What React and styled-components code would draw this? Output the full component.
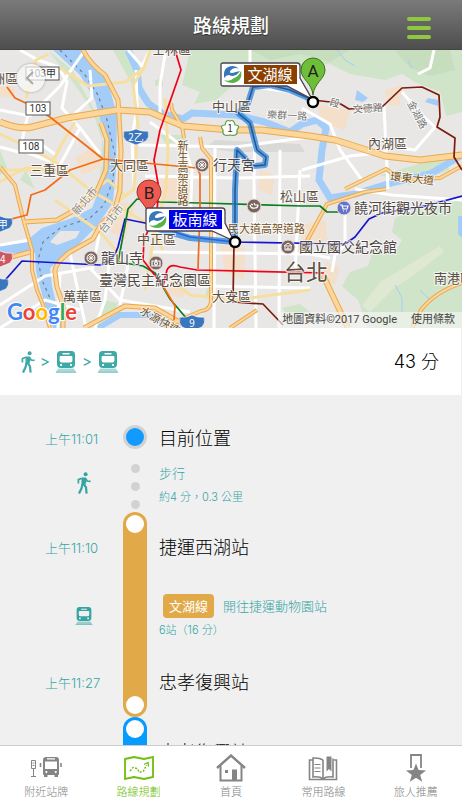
import styled, { createGlobalStyle, css } from "styled-components"

const GlobalStyle = createGlobalStyle`
  * {
    box-sizing: border-box;
  }
  body {
    margin: 0;
    background: #f0f0f0;
    font-family: Inter, "Noto Sans CJK TC", sans-serif;
    color: #111;
  }
  button {
    padding: 0;
    border: 0;
    background: none;
    font: inherit;
    color: inherit;
    cursor: pointer;
  }
`

const Screen = styled.div`
  display: flex;
  flex-direction: column;
  height: 100vh;
`

const Header = styled.header`
  display: grid;
  grid-template-columns: 1fr auto 1fr;
  align-items: center;
  flex: none;
  height: 50px;
  padding: 4px 31px 0;
  background: linear-gradient(#7a7a7a, #4e4e4e);
  border-bottom: 1px solid #444;
`

const Title = styled.h1`
  grid-column: 2;
  margin: 0;
  font-size: 19px;
  line-height: 24px;
  font-weight: 500;
  color: #fff;
  text-shadow: 0 1px 1px rgba(0, 0, 0, 0.5);
`

const MenuButton = styled.button`
  justify-self: end;
  display: flex;
  flex-direction: column;
  gap: 5px;
  width: 24px;
  padding-top: 2px;
`

const MenuBar = styled.span`
  height: 4px;
  border-radius: 2px;
  background: #8fc73e;
`

const MapArea = styled.section`
  position: relative;
  flex: none;
  height: 278px;
  overflow: hidden;
`

const MapSvg = styled.svg`
  display: block;
  width: 100%;
  height: 100%;
  font-family: "Noto Sans CJK TC", sans-serif;
`

const BackButton = styled.button`
  position: absolute;
  top: 14px;
  left: 17px;
  display: grid;
  place-items: center;
  width: 28px;
  height: 28px;
  border-radius: 50%;
  background: rgba(250, 250, 250, 0.7);
  box-shadow: 0 0 3px rgba(0, 0, 0, 0.3);
`

const Attribution = styled.div`
  position: absolute;
  right: 0;
  bottom: 0;
  display: flex;
  gap: 14px;
  padding: 0 7px 0 4px;
  background: rgba(245, 245, 245, 0.65);
  font: 11px/16px Roboto, "Noto Sans CJK TC", sans-serif;
  color: #444;

  a {
    color: inherit;
    text-decoration: none;
  }
`

const Summary = styled.section`
  display: flex;
  align-items: center;
  justify-content: space-between;
  flex: none;
  height: 67px;
  padding: 0 22px 0 21px;
  background: #fff;
  border-right: 1px solid #f0f0f0;
`

const Modes = styled.div`
  display: flex;
  align-items: center;
  gap: 5px;
  font-size: 15px;
  color: #3fa9a7;
`

const Duration = styled.span`
  font-size: 18px;
  line-height: 24px;
  font-weight: 300;
  color: #000;
`

const Timeline = styled.main`
  flex: 1;
  min-height: 0;
  padding-top: 30px;
  overflow-y: auto;
  scrollbar-width: none;
`

const Row = styled.section`
  display: grid;
  grid-template-columns: 123px 24px 1fr;
  min-height: ${(props) => props.$height}px;
`

const column = css`
  display: flex;
  flex-direction: column;
  justify-content: ${(props) => (props.$spread ? "space-between" : "center")};
  padding-block: ${(props) => (props.$spread ? "24px 22px" : "2px 0")};
`

const TimeColumn = styled.div`
  ${column}
  padding-left: 45px;
  color: #35a5a3;
`

const Time = styled.time`
  font-size: 13px;
  line-height: 24px;
  font-weight: 300;
`

const ModeIcon = styled.span`
  display: grid;
  place-items: center;
  width: 77px;
`

const Details = styled.div`
  ${column}
  padding-left: 12px;
`

const Station = styled.h2`
  margin: 0;
  font-size: 18px;
  line-height: 24px;
  font-weight: 300;
  color: #000;
`

const Line = styled.div`
  display: flex;
  align-items: center;
  gap: 9px;
  font-size: 13px;
  line-height: 24px;
  font-weight: 300;
  color: #35a5a3;
`

const Note = styled.p`
  margin: 4px 0 0;
  font-size: 11px;
  line-height: 16px;
  font-weight: 300;
  color: #35a5a3;
`

const LineBadge = styled.span`
  margin-left: 4px;
  padding: 0 6px;
  border-radius: 4px;
  background: ${(props) => props.$color};
  color: #fff;
  font-weight: 400;
`

const StartMark = styled.span`
  width: 24px;
  height: 24px;
  border: 3px solid #d2d2d2;
  border-radius: 50%;
  background: #119bff;
`

const Dots = styled.span`
  display: flex;
  flex-direction: column;
  align-items: center;
  gap: 9px;
  padding-top: 13px;
`

const Dot = styled.span`
  width: 9px;
  height: 9px;
  border-radius: 50%;
  background: #d2d2d2;
`

const Rail = styled.span`
  display: flex;
  flex-direction: column;
  justify-content: space-between;
  padding: 3px;
  border-radius: 12px;
  background: ${(props) => props.$color};
`

const RailStop = styled.span`
  width: 18px;
  height: 18px;
  border-radius: 50%;
  background: #fff;
`

const TabBar = styled.nav`
  display: grid;
  grid-template-columns: repeat(5, 1fr);
  flex: none;
  height: 55px;
  background: #fff;
  border-top: 1px solid #ccc;
`

const Tab = styled.a`
  display: flex;
  flex-direction: column;
  align-items: center;
  padding-top: 6px;
  font-size: 11px;
  line-height: 16px;
  font-weight: 300;
  text-decoration: none;
  color: ${(props) => (props.$active ? "#6ebe0a" : "#858585")};
`

const TabIcon = styled.span`
  display: grid;
  place-items: center;
  height: 32px;
`

function WalkIcon() {
  return (
    <svg width="14" height="22" viewBox="0 0 14 22" fill="none" stroke="currentColor">
      <circle cx="8.6" cy="2.2" r="2" fill="currentColor" stroke="none" />
      <path d="M4.6 5.400h4.200l.8 3.400-1.400 4.400H4.400z" fill="currentColor" stroke="none" />
      <path d="M4.800 6.200 1.400 7.600v4" strokeWidth="1.700" />
      <path d="M8.400 6.200l1.800 2.800 3.400.4" strokeWidth="1.700" />
      <path d="M5.600 12 4.400 16.600 2 21.600" strokeWidth="2.200" />
      <path d="M6.800 12l2.200 3.400.6 6.200" strokeWidth="2.200" />
    </svg>
  )
}

function TrainIcon({ size = 22 }) {
  return (
    <svg width={size} height={size} viewBox="0 0 22 22">
      <path
        fill="currentColor"
        fillRule="evenodd"
        d="M5.5 0h11q3.500 0 3.500 3.500v9.500q0 4-4 4H6q-4 0-4-4V3.500Q2 0 5.500 0zM7.500 2v1.400h7V2zM5.600 5q-1 0-1 1v3.400q0 2 2 2h8.800q2 0 2-2V6q0-1-1-1zM6 12.800a1.100 1.100 0 1 0 .1 0zM16 12.800a1.100 1.100 0 1 0 .1 0z"
      />
      <path d="M3.400 17.600h15.200l3 4H.4z" fill="currentColor" opacity=".45" />
      <path d="M1 21.300h20" stroke="currentColor" opacity=".5" />
    </svg>
  )
}

function StopIcon() {
  return (
    <svg width="32" height="24" viewBox="0 0 32 24" fill="none" stroke="currentColor">
      <path d="M1.500 4.500h4v8h-4zM3.500 13v7M1 20.500h5M2.500 7h2M2.500 9.500h2" />
      <path
        fill="currentColor"
        stroke="none"
        fillRule="evenodd"
        d="M16 1h10q3 0 3 3v14q0 1-1 1v2h-3.500v-2h-7v2H14v-2q-1 0-1-1V4q0-3 3-3zm1 1.300v1.300h8V2.300zM15 5.500v7.500h12V5.500zM16.300 15a1 1 0 1 0 .1 0zM25.700 15a1 1 0 1 0 .1 0z"
      />
      <path d="M10.500 7v4M31 7v4" strokeWidth="1.600" />
    </svg>
  )
}

function RouteIcon() {
  return (
    <svg width="30" height="24" viewBox="0 0 30 24" fill="none" stroke="currentColor">
      <path d="M1 3l9-2 10 2 9-2v20l-9 2-10-2-9 2z" strokeWidth="1.800" />
      <path d="M6 15l3-3.500 4 1 2.500 4 4-1.500 3-6" strokeWidth="1.400" strokeDasharray="2 1.400" />
      <path d="M20 8.500l4-2 .5 4" strokeWidth="1.300" />
    </svg>
  )
}

function HomeIcon() {
  return (
    <svg width="30" height="28" viewBox="0 0 30 28" fill="none" stroke="currentColor">
      <path d="M1 14 15 1.500 29 14" strokeWidth="2.400" />
      <path d="M4.500 12v14.500h21V12" strokeWidth="2" />
      <path d="M16 15.500h5v11h-5z" fill="currentColor" stroke="none" />
      <path d="M9 16h3v3H9z" fill="currentColor" stroke="none" />
    </svg>
  )
}

function BookIcon() {
  return (
    <svg width="30" height="26" viewBox="0 0 30 26" fill="none" stroke="currentColor">
      <path
        d="M15 5q-3-2-8-2H5v19q7-1 10 2 3-3 10-2V3.500M15 5v18.500M5 5H1.500v19.500h27V5H26"
        strokeWidth="1.600"
      />
      <path d="M6.500 9.500h6M6.500 13h6M6.500 16.500h6" />
      <path d="M18.500 1.500h5v15L21 14l-2.500 2.500z" fill="currentColor" stroke="none" />
    </svg>
  )
}

function MedalIcon() {
  return (
    <svg width="22" height="28" viewBox="0 0 22 28">
      <path d="M6 14V1h10v13" fill="none" stroke="currentColor" strokeWidth="1.800" />
      <path
        d="M11 9.500l2.600 6.600 7.400.3-5.800 4.500 2 6.900-6.200-4-6.200 4 2-6.900L1 16.400l7.400-.3z"
        fill="currentColor"
      />
    </svg>
  )
}

// road geometry, grouped by how it is painted
const whiteRoads = [
  "M20 0L38 10 58 17 67 32 62 58 80 78 100 104",
  "M0 60L30 66 60 36 85 0M30 55L20 100 60 115 80 78",
  "M0 97L22 103 38 92 56 105M90 20L92 48 70 68",
  "M136 20L137 56 132 90 134 135M128 0L142 16 150 0",
  "M165 5L160 35 160 65M150 72L185 98 192 120 190 180",
  "M136 95L235 97 310 87M145 126L237 128 310 126",
  "M255 82L254 130 256 278M280 100L279 278M300 120L295 225",
  "M150 202L310 204 330 208M150 235L310 238M215 97L214 278",
  "M0 255L45 226 90 218 120 250 190 262M0 278L45 250 80 260",
  "M70 203L76 232 86 278M110 205L105 250 95 278M120 255L128 215",
  "M302 58L330 74 340 100 362 130M384 56L386 98 388 139",
  "M402 42L422 65 435 77 415 100 400 98M418 24L430 18 434 0",
  "M302 120L350 106 386 102M355 139L392 145 462 150",
  "M345 160L345 195 335 205 332 222M250 0L250 18 262 38 290 42",
  "M0 195L30 190M60 222L58 278M100 180L92 222",
]

const yellowRoads = [
  "M26 48L36 10 48 4M60 18L88 36 125 32 144 18 150 0",
  "M144 18L133 35 138 75 134 139 120 150",
  "M0 84L30 98 55 112 90 140 150 175 163 200",
  "M75 72L63 92 48 120 0 120",
  "M165 48L168 100 166 139 155 180 145 240",
  "M55 150L100 182 120 205M82 148L108 130 125 145",
  "M0 132L25 118 60 120M165 225L190 245 235 250 310 240",
]

const highways = [
  { width: 7, d: "M0 72Q20 80 32 77L67 68 117 60 150 62 183 76 230 80 262 80 310 86 335 90 385 106 420 110 462 105" },
  { width: 5, d: "M83 0Q90 14 105 25L118 50 121 100 120 140 115 159 100 176 93 189 70 202Q54 214 55 222L57 237 63 255 63 278" },
  { width: 4, d: "M0 117L15 135 24 172 32 200 32 220 37 240 43 255 50 278" },
  { width: 5, d: "M24 172L57 170 75 160 96 143 106 120 107 90 101 73" },
  { width: 4, d: "M171 53L172 60 182 76 184 88M200 87L202 98 211 109 211 250Q211 260 201 261L180 270 165 278" },
  { width: 4, d: "M345 139L386 119 402 130 440 128 462 116" },
  { width: 4, d: "M386 139L365 142 327 154 302 200M462 233Q435 242 421 260L412 278M257 260L230 278" },
  { width: 6, d: "M323 225L348 278" },
  { width: 5, d: "M84 278L125 256 155 258 190 278M0 210L30 202" },
]

const metroLines = [
  { color: "#1515cf", d: "M0 236L22 211 100 215Q112 214 118 197L125 169 150 174 190 187 235 192 345 194 355 187 369 169 382 163 425 156 462 146" },
  { color: "#087e20", d: "M200 153L160 152 137 149 128 159 120 202 118 212 143 216 155 223 170 249 187 269M200 153L302 156 320 156 327 162 344 162" },
  { color: "#f00019", d: "M175 0L181 20 173 43 160 80 154 110 159 139 157 160 144 190 143 210 163 236 167 220Q170 213 180 217L197 220 324 223" },
  { color: "#f26b16", d: "M7 37L15 48 30 55 50 67 103 109 197 118 200 124 200 160 198 219M103 109L70 120 45 140 31 145 27 165 0 172M163 236L175 256 174 270" },
  { color: "#7c1c0b", d: "M313 50L339 53 349 59 382 57 402 38 422 37 439 45 440 67 437 77 455 88 454 107 462 120M234 192L233 252 263 254 283 275" },
]

const districts = [
  { x: -21, y: 33, text: "蘆洲區", size: 13 },
  { x: 152, y: 4, text: "士林區", size: 13 },
  { x: 30, y: 125, text: "三重區", size: 13 },
  { x: 110, y: 120, text: "大同區", size: 13 },
  { x: 212, y: 61, text: "中山區", size: 13 },
  { x: 368, y: 98, text: "內湖區", size: 13 },
  { x: 280, y: 151, text: "松山區", size: 13 },
  { x: 137, y: 194, text: "中正區", size: 13 },
  { x: 63, y: 251, text: "萬華區", size: 13 },
  { x: 212, y: 251, text: "大安區", size: 13 },
  { x: 434, y: 233, text: "南港區", size: 13 },
  { x: 284, y: 230, text: "台北", size: 22 },
]

const places = [
  { x: 213, y: 120, text: "行天宮" },
  { x: 101, y: 213, text: "龍山寺" },
  { x: 99, y: 235, text: "臺灣民主紀念園區" },
  { x: 299, y: 202, text: "國立國父紀念館" },
  { x: 354, y: 163, text: "饒河街觀光夜市" },
]

const roadNames = [
  { x: 267, y: 68, text: "樂群一路", angle: 3, size: 10, color: "#777" },
  { x: 353, y: 63, text: "文德路", angle: -4, size: 10, color: "#777" },
  { x: 329, y: 55, text: "段", angle: 15, size: 10, color: "#777" },
  { x: 407, y: 53, text: "金湖路", angle: 62, size: 10, color: "#777" },
  { x: 390, y: 130, text: "環東大道", angle: 6, size: 11, color: "#73501e" },
  { x: 228, y: 183, text: "民大道高架道路", angle: 0, size: 11, color: "#73501e" },
  { x: 77, y: 166, text: "新北市", angle: -50, size: 11, color: "#8d8d8d" },
  { x: 104, y: 184, text: "台北市", angle: -52, size: 11, color: "#8d8d8d" },
  { x: 139, y: 263, text: "水源快速道路", angle: 30, size: 11, color: "#73501e" },
]

function RoadShield({ x, y, text, width = 24 }) {
  return (
    <g>
      <rect x={x} y={y} width={width} height="13" fill="#fff" stroke="#555" />
      <text x={x + width / 2} y={y + 10} fontSize="10" textAnchor="middle" fill="#333" fontFamily="Roboto, 'Noto Sans CJK TC', sans-serif">
        {text}
      </text>
    </g>
  )
}

function BlueShield({ x, y, text, color = "#3a76bd" }) {
  return (
    <g transform={`translate(${x} ${y})`}>
      <path d="M-12-6Q-6-5 0-8 6-5 12-6 14 0 10 4 5 6 0 8-5 6-10 4-14 0-12-6z" fill={color} stroke="#fff" strokeWidth=".6" />
      <text y="4" fontSize="10" textAnchor="middle" fill="#fff">
        {text}
      </text>
    </g>
  )
}

function Poi({ x, y, kind, color = "#7b655f" }) {
  return (
    <g transform={`translate(${x} ${y})`} fill="none" stroke="#fff" strokeWidth="1.200">
      <circle r="7" fill={color} stroke="#e8e2df" strokeWidth="1" />
      {kind === "temple" && <path d="M-4 0H4M0-4V4M-3-3L3 3M-3 3L3-3M0-4A4 4 0 1 1-.1-4" strokeWidth=".9" />}
      {kind === "museum" && <path d="M-4-1L0-4 4-1zM-3 0V3H3V0M-1 3V1H1V3" strokeWidth="1" />}
      {kind === "camera" && <path d="M-4-2H4V3H-4zM-1-3H1M0-1A1.500 1.500 0 1 1-.1-1" />}
      {kind === "cart" && <path d="M-4-3H-2L-1 1H3L4-2H-1.500M-1 3H0M2 3H3" />}
      {kind === "dragon" && <path d="M-4-1Q-3 3 1 2 4 2 4-1L1-1 0-3M-3-2L-1-1" />}
    </g>
  )
}

function Pin({ x, y, letter, color, edge }) {
  return (
    <g transform={`translate(${x} ${y})`}>
      <path d="M0 0C-1-12-12-16-12-25A12 12 0 0 1 12-25C12-16 1-12 0 0z" fill={color} stroke={edge} />
      <text y="-18" fontSize="17" textAnchor="middle" fill="#222" fontFamily="Roboto, sans-serif">
        {letter}
      </text>
    </g>
  )
}

function LineCallout({ x, y, text, color, tip }) {
  return (
    <g transform={`translate(${x} ${y})`}>
      <path
        d={`M2 0H76Q79 0 79 3V15L${tip}L66 23H2Q0 23 0 21V2Q0 0 2 0z`}
        fill="#fff"
        stroke="#4b4252"
        strokeWidth="1.300"
      />
      <path d="M3 10A8.500 8 0 0 1 18 6Q13 3 9 8 8 11 13 9.500L19 8Q14 15 8 12 5 12 3 15z" fill="#3778b8" />
      <path d="M20 8Q22 18 12 20 6 20 3 17 9 19 13 15 17 14 20 8z" fill="#59b245" />
      <rect x="23" y="2" width="53" height="19" fill={color} />
      <text x="49" y="17" fontSize="15" textAnchor="middle" fill="#fff">
        {text}
      </text>
    </g>
  )
}

function CityMap() {
  return (
    <MapSvg viewBox="0 0 462 278" preserveAspectRatio="xMidYMid slice" role="img" aria-label="台北路線地圖">
      <rect x="-200" width="862" height="278" fill="#e8e7e5" />
      <path
        fill="#d0e4c9"
        d="M190 0L182 35 200 42 194 54 216 50 230 38 250 32 272 26 300 18 330 14 350 24 385 30 402 24 415 32 440 42 446 66 462 62V0z"
      />
      <path fill="#bfd9b7" d="M250 0L270 10 300 4 330 12 350 0zM395 0L410 18 430 26 455 20 450 0z" opacity=".6" />
      <path
        fill="#d0e4c9"
        d="M462 150L420 158 395 168 392 182 402 190 395 202 372 204 368 216 350 222 342 236 358 250 368 278H462z"
      />
      <path fill="#dfe8d2" d="M362 256L380 232 410 214 440 196 444 202 418 222 392 240 370 262z" />
      <path
        fill="#d0e4c9"
        d="M48 0L75 35 92 60 102 90 100 130 108 130 100 70 72 20zM113 0H125L150 55 135 40zM20 130L35 139 26 120zM0 100L8 120 0 125zM103 250L118 253 112 267 100 268zM160 85L185 85 186 92 165 93zM207 238L213 232V250L205 248zM380 125L440 108 450 120 410 135zM282 258L300 254 310 262 290 268zM155 30L163 28V36H155z"
      />
      <path
        fill="#f3dfca"
        d="M75 108L95 95 105 115 82 125zM110 150L135 154 125 190 108 180zM318 55L350 60 345 80 320 72zM385 40L402 35 400 55 388 56zM160 130L185 125 195 150 165 152zM220 195L245 198 244 230 225 222zM302 175L325 170 328 192 302 190zM0 35L15 37 14 48 0 46zM260 120L275 125 272 145 258 140zM170 233L188 235 182 248 168 244zM325 212L340 218 335 235 322 230z"
      />
      <path fill="#d9d9d8" d="M215 90L300 94 305 102 235 102 205 98z" />

      <path
        fill="#a3cdf8"
        d="M53 0H83L108 32 117 65 116 120 113 152 98 175 78 195 60 208 50 218 52 236 62 278H53L43 248 36 222 35 203 10 203 0 207V196L25 192 42 178 72 168 92 158 103 130 104 85 95 50 80 25z"
      />
      <path fill="#e8e7e5" d="M50 192L60 181 80 181 76 188 57 195z" />
      <path fill="none" stroke="#a3cdf8" strokeWidth="7" d="M128 0L137 20 139 38 148 53 163 64 183 69 192 63 236 65 265 72 290 82 302 74 317 70 326 78 322 100 319 130 330 148 355 144 395 132 430 124 462 105" />
      <path fill="none" stroke="#a3cdf8" strokeWidth="6" d="M98 278L120 265 150 265 172 278" />
      <path fill="#a3cdf8" d="M357 40L368 48 363 52 355 50zM428 48L438 50V56L425 52zM458 166H462V188L458 184z" />
      <path fill="none" stroke="#a3cdf8" d="M337 0L345 10 355 16M408 10L412 18M395 235L402 248 402 262M420 240L432 252" />
      <path fill="none" stroke="#6d7d92" strokeWidth="1.200" strokeDasharray="3 4" d="M60 0L85 25 98 45 107 70 115 105 113 130 104 155 90 168 60 178 43 192 38 210 42 230 53 255 58 278" />

      <g fill="none" stroke="#fff" strokeWidth="3" strokeLinejoin="round">
        {whiteRoads.map((d) => (
          <path key={d} d={d} />
        ))}
      </g>
      <g fill="none" stroke="#f6dfa0" strokeWidth="3" strokeLinejoin="round">
        {yellowRoads.map((d) => (
          <path key={d} d={d} />
        ))}
      </g>
      <g fill="none" strokeLinejoin="round">
        {highways.map((road) => (
          <path key={road.d} d={road.d} stroke="#eaa94e" strokeWidth={road.width} />
        ))}
        {highways.map((road) => (
          <path key={road.d} d={road.d} stroke="#fcd69b" strokeWidth={road.width - 2} />
        ))}
      </g>
      <g fill="none" strokeWidth="1.700" strokeLinejoin="round">
        {metroLines.map((line) => (
          <path key={line.color} d={line.d} stroke={line.color} />
        ))}
      </g>

      <g fill="none" strokeLinejoin="round">
        <path
          stroke="#2b83dc"
          strokeOpacity=".75"
          strokeWidth="6"
          d="M313 50L290 40 270 35 253 37 248 53 238 63 250 73 257 100 266 107 265 115 253 116 237 100 235 140 235 192 190 188 148 176"
        />
        <path
          stroke="#24558c"
          strokeWidth="1.500"
          d="M313 50L290 40 270 35 253 37 248 53 238 63 250 73 257 100 266 107 265 115 253 116 237 100 235 140 235 192"
        />
      </g>

      <g fill="#5d5145" stroke="#fff" strokeWidth="2" strokeOpacity=".7" paintOrder="stroke">
        {districts.map((label) => (
          <text key={label.text} x={label.x} y={label.y} fontSize={label.size}>
            {label.text}
          </text>
        ))}
        {places.map((label) => (
          <text key={label.text} x={label.x} y={label.y} fontSize="14" fill="#4e4642">
            {label.text}
          </text>
        ))}
        {roadNames.map((label) => (
          <text
            key={label.text}
            transform={`translate(${label.x} ${label.y}) rotate(${label.angle})`}
            fontSize={label.size}
            fill={label.color}
          >
            {label.text}
          </text>
        ))}
        <text x="183" y="90" fontSize="11" fill="#73501e" style={{ writingMode: "vertical-rl" }}>
          新生高架道路
        </text>
      </g>

      <RoadShield x={26} y={17} text="103甲" width={33} />
      <RoadShield x={26} y={52} text="103" />
      <RoadShield x={19} y={90} text="108" />
      <BlueShield x={136} y={87} text="2乙" />
      <BlueShield x={0} y={174} text="1甲" />
      <BlueShield x={0} y={209} text="64" color="#cf5561" />
      <BlueShield x={-4} y={235} text="3" />
      <BlueShield x={192} y={273} text="9" />
      <g transform="translate(230 79)">
        <path d="M0-8Q4-10 5-4 11-4 7 1 8 8 0 6-8 8-7 1-11-4-5-4-4-10 0-8z" fill="#fff" stroke="#5b9e47" strokeWidth="1.200" />
        <text y="3" fontSize="10" textAnchor="middle" fill="#333">
          1
        </text>
      </g>

      <Poi x={202} y={115} kind="temple" />
      <Poi x={91} y={208} kind="temple" />
      <Poi x={156} y={213} kind="camera" />
      <Poi x={254} y={156} kind="dragon" />
      <Poi x={288} y={197} kind="museum" />
      <Poi x={344} y={158} kind="cart" color="#6473c8" />

      <Pin x={149} y={167} letter="B" color="#ee5a50" edge="#a32c25" />
      <LineCallout x={221} y={13} text="文湖線" color="#8a3f00" tip="91 36" />
      <LineCallout x={146} y={158} text="板南線" color="#0000e6" tip="88 33" />
      <circle cx="235" cy="192" r="5" fill="#fff" stroke="#000" strokeWidth="2.500" />
      <circle cx="313" cy="52" r="5" fill="#fff" stroke="#000" strokeWidth="2.500" />
      <Pin x={313} y={45} letter="A" color="#6ebe39" edge="#39751d" />

      <text x="7" y="270" fontSize="22" fontWeight="700" fontFamily="Lato, sans-serif" stroke="#fff" strokeWidth="2" paintOrder="stroke">
        <tspan fill="#4285f4">G</tspan>
        <tspan fill="#ea4335">o</tspan>
        <tspan fill="#fbbc05">o</tspan>
        <tspan fill="#4285f4">g</tspan>
        <tspan fill="#34a853">l</tspan>
        <tspan fill="#ea4335">e</tspan>
      </text>
    </MapSvg>
  )
}

const rides = [
  {
    line: "文湖線",
    color: "#e1a947",
    from: "捷運西湖站",
    to: "忠孝復興站",
    depart: "上午11:10",
    arrive: "上午11:27",
    bound: "開往捷運動物園站",
    note: "6站（16 分）",
  },
  {
    line: "板南線",
    color: "#069bff",
    from: "忠孝復興站",
  },
]

function Ride({ ride }) {
  return (
    <Row $height={205}>
      <TimeColumn $spread>
        {ride.depart && <Time>{ride.depart}</Time>}
        {ride.arrive && (
          <>
            <ModeIcon>
              <TrainIcon size={18} />
            </ModeIcon>
            <Time>{ride.arrive}</Time>
          </>
        )}
      </TimeColumn>
      <Rail $color={ride.color}>
        <RailStop />
        <RailStop />
      </Rail>
      <Details $spread>
        <Station>{ride.from}</Station>
        {ride.to && (
          <>
            <div>
              <Line>
                <LineBadge $color={ride.color}>{ride.line}</LineBadge>
                {ride.bound}
              </Line>
              <Note>{ride.note}</Note>
            </div>
            <Station>{ride.to}</Station>
          </>
        )}
      </Details>
    </Row>
  )
}

const tabs = [
  { label: "附近站牌", Icon: StopIcon },
  { label: "路線規劃", Icon: RouteIcon, active: true },
  { label: "首頁", Icon: HomeIcon },
  { label: "常用路線", Icon: BookIcon },
  { label: "旅人推薦", Icon: MedalIcon },
]

export default function App() {
  return (
    <Screen>
      <GlobalStyle />
      <Header>
        <Title>路線規劃</Title>
        <MenuButton aria-label="選單">
          <MenuBar />
          <MenuBar />
          <MenuBar />
        </MenuButton>
      </Header>

      <MapArea>
        <CityMap />
        <BackButton aria-label="返回">
          <svg width="14" height="14" viewBox="0 0 14 14" fill="none" stroke="#aaa" strokeWidth="2">
            <path d="M9 1L3 7l6 6" />
          </svg>
        </BackButton>
        <Attribution>
          <span>地圖資料©2017 Google</span>
          <a href="#terms">使用條款</a>
        </Attribution>
      </MapArea>

      <Summary>
        <Modes>
          <WalkIcon />
          <span>&gt;</span>
          <TrainIcon />
          <span>&gt;</span>
          <TrainIcon />
        </Modes>
        <Duration>43 分</Duration>
      </Summary>

      <Timeline>
        <Row $height={24}>
          <TimeColumn>
            <Time>上午11:01</Time>
          </TimeColumn>
          <StartMark />
          <Details>
            <Station>目前位置</Station>
          </Details>
        </Row>
        <Row $height={61}>
          <TimeColumn>
            <ModeIcon>
              <WalkIcon />
            </ModeIcon>
          </TimeColumn>
          <Dots>
            <Dot />
            <Dot />
            <Dot />
          </Dots>
          <Details>
            <Line>步行</Line>
            <Note>約4 分，0.3 公里</Note>
          </Details>
        </Row>
        {rides.map((ride) => (
          <Ride key={ride.line} ride={ride} />
        ))}
      </Timeline>

      <TabBar>
        {tabs.map(({ label, Icon, active }) => (
          <Tab key={label} href="#" $active={active} aria-current={active ? "page" : undefined}>
            <TabIcon>
              <Icon />
            </TabIcon>
            {label}
          </Tab>
        ))}
      </TabBar>
    </Screen>
  )
}
